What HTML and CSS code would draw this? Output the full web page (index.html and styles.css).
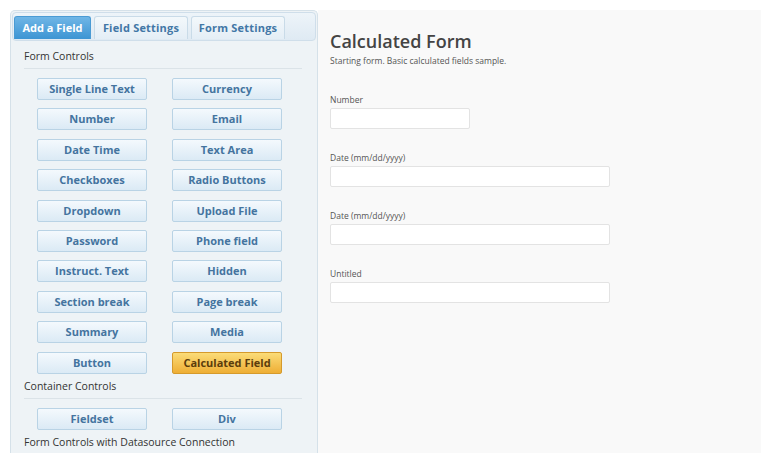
FILE: index.html
```html
<!DOCTYPE html>
<html lang="en">
<head>
  <meta charset="UTF-8">
  <title>Calculated Form</title>
  <link rel="stylesheet" href="styles.css">
</head>
<body>

  <div class="page">
    <div class="sidebar">
      <div class="tabs">
        <span class="tab active">Add a Field</span>
        <span class="tab wide">Field Settings</span>
        <span class="tab wide">Form Settings</span>
      </div>

      <div class="group-title">Form Controls</div>
      <div class="controls">
        <span class="ctrl">Single Line Text</span>
        <span class="ctrl">Currency</span>
        <span class="ctrl">Number</span>
        <span class="ctrl">Email</span>
        <span class="ctrl">Date Time</span>
        <span class="ctrl">Text Area</span>
        <span class="ctrl">Checkboxes</span>
        <span class="ctrl">Radio Buttons</span>
        <span class="ctrl">Dropdown</span>
        <span class="ctrl">Upload File</span>
        <span class="ctrl">Password</span>
        <span class="ctrl">Phone field</span>
        <span class="ctrl">Instruct. Text</span>
        <span class="ctrl">Hidden</span>
        <span class="ctrl">Section break</span>
        <span class="ctrl">Page break</span>
        <span class="ctrl">Summary</span>
        <span class="ctrl">Media</span>
        <span class="ctrl">Button</span>
        <span class="ctrl selected">Calculated Field</span>
      </div>

      <div class="group-title tight">Container Controls</div>
      <div class="controls">
        <span class="ctrl">Fieldset</span>
        <span class="ctrl">Div</span>
      </div>

      <div class="group-title tight plain">Form Controls with Datasource Connection</div>
    </div>

    <div class="main">
      <h1>Calculated Form</h1>
      <p class="subtitle">Starting form. Basic calculated fields sample.</p>

      <div class="field">
        <label>Number</label>
        <div class="input short"></div>
      </div>
      <div class="field">
        <label>Date (mm/dd/yyyy)</label>
        <div class="input"></div>
      </div>
      <div class="field">
        <label>Date (mm/dd/yyyy)</label>
        <div class="input"></div>
      </div>
      <div class="field">
        <label>Untitled</label>
        <div class="input"></div>
      </div>
    </div>
  </div>

</body>
</html>
```

FILE: styles.css
```css
body {
  margin: 0;
  background: #fff;
  font-family: "Open Sans", sans-serif;
}
.page {
  display: flex;
  padding: 10px 0 0 10px;
  height: 443px;
  overflow: hidden;
}
.sidebar {
  width: 304px;
  padding: 1px 1px;
  background: #eef3f6;
  border: 1px solid #d5e1e9;
  border-bottom: none;
  border-radius: 5px 5px 0 0;
}
.tabs {
  display: flex;
  gap: 3px;
  height: 24px;
  padding: 3px 1px 0;
  background: linear-gradient(#edf4f9, #dfeaf3);
  border: 1px solid #cfdeea;
  border-radius: 4px;
}
.tab {
  width: 75px;
  height: 22px;
  line-height: 22px;
  text-align: center;
  font-size: 11px;
  font-weight: bold;
  color: #4277a6;
  background: linear-gradient(#f3f8fb, #e4eef6);
  border: 1px solid #c9dbe8;
  border-bottom: none;
  border-radius: 3px 3px 0 0;
}
.tab.wide {
  width: 92px;
  letter-spacing: 0.2px;
}
.tab.active {
  color: #fff;
  background: linear-gradient(#6fb6e6, #3d95d3);
  border-color: #4a9bd4;
}
.group-title {
  margin: 8px 14px 0 12px;
  padding-bottom: 5px;
  border-bottom: 1px solid #dbe3e8;
  font-size: 10.5px;
  color: #333;
}
.group-title.tight {
  margin-top: 5px;
}
.group-title.plain {
  border-bottom: none;
}
.controls {
  display: grid;
  grid-template-columns: 110px 110px;
  column-gap: 25px;
  row-gap: 8.4px;
  padding: 9px 0 0 25px;
}
.ctrl {
  height: 20px;
  line-height: 20px;
  text-align: center;
  font-size: 11px;
  font-weight: bold;
  color: #44749f;
  background: linear-gradient(#f4f9fd, #dbeaf5);
  border: 1px solid #b9d3e5;
  border-radius: 2px;
}
.ctrl.selected {
  color: #5b3d0c;
  background: linear-gradient(#fbdc78, #eeae35);
  border-color: #d59a2c;
}
.main {
  flex: 1;
  padding: 20px 12px;
  background: #f9f9f9;
  color: #444;
}
h1 {
  margin: 0;
  font-size: 18px;
  font-weight: 600;
  line-height: 22px;
  color: #444;
}
.subtitle {
  margin: 3px 0 28px;
  font-size: 8.5px;
  color: #555;
}
.field {
  margin-bottom: 23px;
}
.field label {
  display: block;
  margin-bottom: 3px;
  font-size: 8.5px;
  color: #555;
}
.input {
  width: 278px;
  height: 19px;
  background: #fff;
  border: 1px solid #e3e3e3;
  border-radius: 2px;
}
.input.short {
  width: 138px;
}
```
